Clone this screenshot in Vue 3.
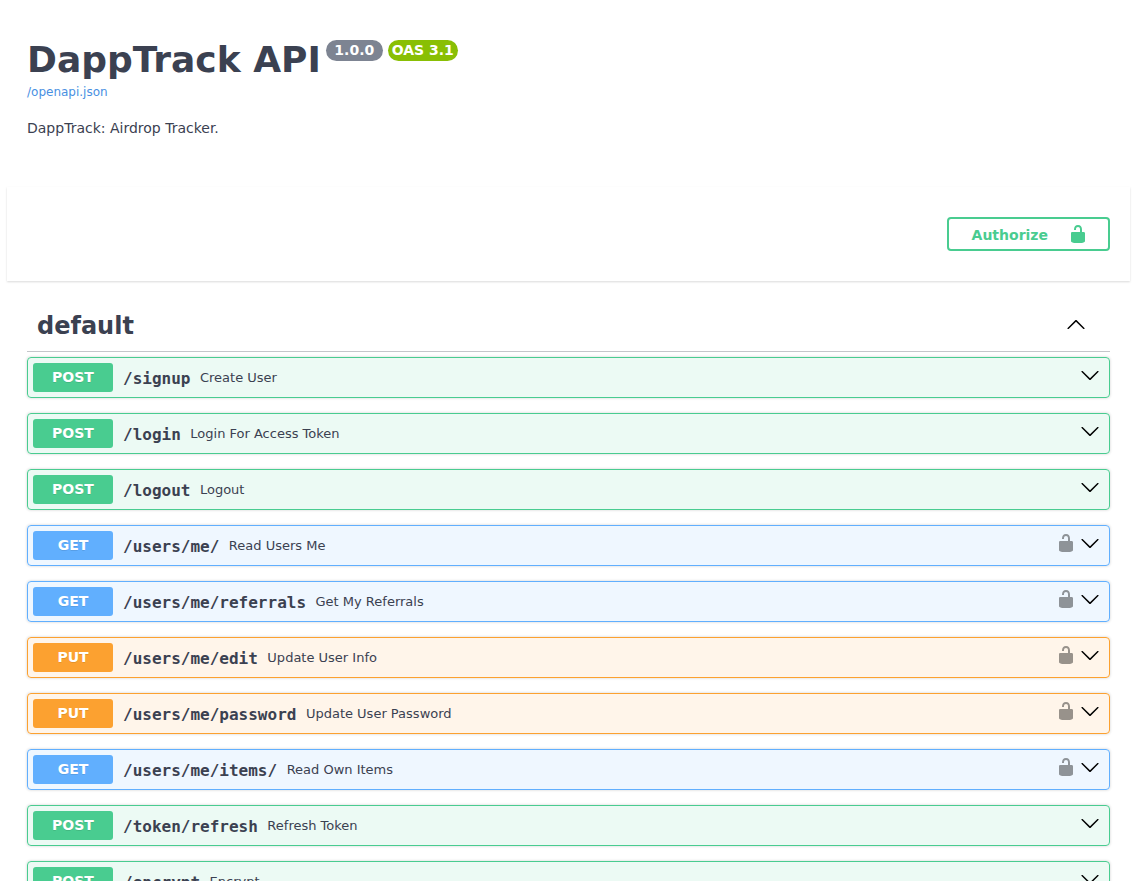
<template>
  <div class="swagger">
    <section class="info wrapper">
      <hgroup class="main">
        <h2 class="title">
          <span>DappTrack API</span>
          <span class="stamps">
            <small class="version">1.0.0</small>
            <small class="oas">OAS 3.1</small>
          </span>
        </h2>
        <a class="spec-link" href="#">/openapi.json</a>
      </hgroup>
      <p class="description">DappTrack: Airdrop Tracker.</p>
    </section>

    <section class="scheme-container">
      <div class="wrapper auth-wrap">
        <button class="authorize" type="button">
          <span>Authorize</span>
          <svg viewBox="0 0 20 20" width="20" height="20"><path :d="lockPath" /></svg>
        </button>
      </div>
    </section>

    <section class="wrapper">
      <h3 class="tag">
        <span>default</span>
        <svg class="tag-arrow" viewBox="0 0 20 20" width="20" height="20"><path :d="arrowPath" /></svg>
      </h3>

      <div v-for="op in operations" :key="op.path" class="opblock" :class="op.method.toLowerCase()">
        <span class="method">{{ op.method }}</span>
        <span class="path">{{ op.path }}</span>
        <span class="summary">{{ op.summary }}</span>
        <svg v-if="op.secured" class="lock" viewBox="0 0 20 20" width="20" height="20"><path :d="lockPath" /></svg>
        <svg class="arrow" viewBox="0 0 20 20" width="20" height="20"><path :d="arrowPath" /></svg>
      </div>
    </section>
  </div>
</template>

<script setup>
// same glyphs swagger-ui ships
const arrowPath =
  "M17.418 6.109c.272-.268.709-.268.979 0s.271.701 0 .969l-7.908 7.83c-.27.268-.707.268-.979 0l-7.908-7.83c-.27-.268-.27-.701 0-.969.271-.268.709-.268.979 0L10 13.25l7.418-7.141z"
const lockPath =
  "M15.8 8H14V5.6C14 2.703 12.665 1 10 1 7.334 1 6 2.703 6 5.6V6h2v-.801C8 3.754 8.797 3 10 3c1.203 0 2 .754 2 2.199V8H4c-.553 0-1 .646-1 1.199V17c0 .549.428 1.139.951 1.307l1.197.387C5.672 18.861 6.55 19 7.1 19h5.8c.549 0 1.428-.139 1.951-.307l1.196-.387c.524-.167.953-.757.953-1.306V9.199C17 8.646 16.352 8 15.8 8z"

const operations = [
  { method: "POST", path: "/signup", summary: "Create User" },
  { method: "POST", path: "/login", summary: "Login For Access Token" },
  { method: "POST", path: "/logout", summary: "Logout" },
  { method: "GET", path: "/users/me/", summary: "Read Users Me", secured: true },
  { method: "GET", path: "/users/me/referrals", summary: "Get My Referrals", secured: true },
  { method: "PUT", path: "/users/me/edit", summary: "Update User Info", secured: true },
  { method: "PUT", path: "/users/me/password", summary: "Update User Password", secured: true },
  { method: "GET", path: "/users/me/items/", summary: "Read Own Items", secured: true },
  { method: "POST", path: "/token/refresh", summary: "Refresh Token" },
  { method: "POST", path: "/encrypt", summary: "Encrypt" },
]
</script>

<style>
html,
body {
  overflow: hidden;
  background: #fff;
}
</style>

<style scoped>
.swagger {
  height: 881px;
  overflow: hidden;
  box-sizing: border-box;
  width: 1136px;
  padding: 0 6px 0 7px;
  font-family: "DejaVu Sans", sans-serif;
  color: #3b4151;
}

.wrapper {
  box-sizing: border-box;
  padding: 0 20px;
}

.info {
  padding-top: 37px;
  height: 187px;
}

.main {
  margin: 0 0 20px;
}

.title {
  display: flex;
  align-items: flex-start;
  gap: 5px;
  margin: 0;
  font-size: 36px;
  font-weight: 700;
  line-height: 46px;
  color: #3b4151;
}

.stamps {
  display: flex;
  gap: 5px;
  margin-top: 3px;
}

.stamps small {
  display: block;
  padding: 2px 4px;
  border-radius: 57px;
  font-size: 14px;
  font-weight: 700;
  line-height: 17px;
  color: #fff;
}

.version {
  background: #7d8492;
  padding: 2px 8.5px !important;
}

.oas {
  background: #89bf04;
}

.spec-link {
  display: block;
  margin-top: 2px;
  font-size: 12px;
  line-height: 15px;
  color: #4990e2;
  text-decoration: none;
}

.description {
  margin: 0;
  font-size: 14px;
  line-height: 17px;
}

.scheme-container {
  height: 94px;
  box-sizing: border-box;
  padding-top: 30px;
  margin-bottom: 20px;
  background: #fff;
  box-shadow: 0 1px 2px 0 rgba(0, 0, 0, 0.15);
}

.auth-wrap {
  display: flex;
  justify-content: flex-end;
}

.authorize {
  display: flex;
  align-items: center;
  height: 34px;
  box-sizing: border-box;
  padding: 0 20px 0 23px;
  background: transparent;
  border: 2px solid #49cc90;
  border-radius: 4px;
  font-family: inherit;
  font-size: 14px;
  font-weight: 700;
  color: #49cc90;
}

.authorize span {
  padding-top: 2px;
}

.authorize svg {
  margin-left: 20px;
  fill: #49cc90;
}

.tag {
  display: flex;
  align-items: center;
  justify-content: space-between;
  margin: 0 0 5px;
  padding: 10px 24px 10px 10px;
  border-bottom: 1px solid rgba(59, 65, 81, 0.3);
  font-size: 24px;
  font-weight: 700;
  line-height: 30px;
}

.tag-arrow {
  transform: rotate(180deg);
  margin-bottom: 2px;
}

.opblock {
  display: flex;
  align-items: center;
  height: 41px;
  box-sizing: border-box;
  margin-bottom: 15px;
  padding: 5px 9px 5px 5px;
  border: 1px solid;
  border-radius: 4px;
  box-shadow: 0 0 3px rgba(0, 0, 0, 0.19);
}

.opblock.post {
  background: rgba(73, 204, 144, 0.1);
  border-color: #49cc90;
}

.opblock.get {
  background: rgba(97, 175, 254, 0.1);
  border-color: #61affe;
}

.opblock.put {
  background: rgba(252, 161, 48, 0.1);
  border-color: #fca130;
}

.method {
  width: 80px;
  flex: none;
  padding: 6px 0;
  border-radius: 3px;
  font-size: 14px;
  font-weight: 700;
  line-height: 17px;
  text-align: center;
  color: #fff;
  text-shadow: 0 1px 0 rgba(0, 0, 0, 0.1);
}

.post .method {
  background: #49cc90;
}

.get .method {
  background: #61affe;
}

.put .method {
  background: #fca130;
}

.path {
  padding: 2px 9.5px 0 10px;
  font-family: "DejaVu Sans Mono", monospace;
  font-size: 16px;
  font-weight: 700;
  line-height: 20px;
}

.summary {
  flex: 1;
  font-size: 13px;
  line-height: 16px;
}

.lock {
  fill: #000;
  opacity: 0.4;
  margin: 0 4px 6px 0;
}

.arrow {
  fill: #000;
  margin-bottom: 6px;
}
</style>
